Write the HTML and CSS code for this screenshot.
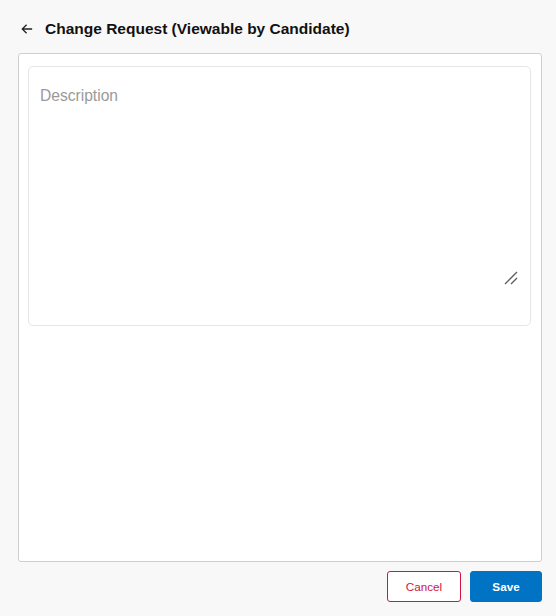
FILE: index.html
```html
<!DOCTYPE html>
<html>
<head>
<meta charset="utf-8">
<link rel="stylesheet" href="styles.css">
</head>
<body>
<div class="page">
  <div class="header">
    <button class="back" aria-label="Back">
      <svg width="14" height="12" viewBox="0 0 14 12"><path d="M13 6H1.5M6.5 1L1.5 6l5 5" fill="none" stroke="#222" stroke-width="1.5"/></svg>
    </button>
    <h1 class="title">Change Request (Viewable by Candidate)</h1>
  </div>
  <div class="card">
    <div class="field">
      <textarea class="desc" placeholder="Description"></textarea>
      <svg class="grip" width="14" height="14" viewBox="0 0 14 14"><path d="M1 13L13 1M7 13L13 7" stroke="#5f5f5f" stroke-width="1.4" fill="none"/></svg>
    </div>
  </div>
  <div class="actions">
    <button class="btn cancel">Cancel</button>
    <button class="btn save">Save</button>
  </div>
</div>
</body>
</html>
```
FILE: styles.css
```css
html, body {
  margin: 0;
  padding: 0;
  background: #f8f8f8;
  font-family: "Liberation Sans", Arial, sans-serif;
}
.page {
  width: 556px;
  height: 616px;
  box-sizing: border-box;
  padding: 16px 14px 14px 18px;
  display: flex;
  flex-direction: column;
}
.header {
  display: flex;
  align-items: center;
  height: 26px;
  margin-bottom: 11px;
}
.back {
  background: none;
  border: 0;
  padding: 0;
  margin: 0 12px 0 3px;
  width: 12px;
  height: 14px;
  display: flex;
  align-items: center;
  cursor: pointer;
}
.title {
  margin: 0;
  font-size: 15.5px;
  font-weight: bold;
  color: #111;
}
.card {
  flex: 1;
  background: #fff;
  border: 1px solid #cfcfcf;
  border-radius: 3px;
  padding: 12px 10px 9px 9px;
}
.field {
  position: relative;
  height: 260px;
  box-sizing: border-box;
  border: 1px solid #e6e6e6;
  border-radius: 5px;
  padding: 19px 12px 40px 11px;
}
.desc {
  display: block;
  width: 100%;
  height: 100%;
  box-sizing: border-box;
  border: 0;
  padding: 0;
  font-family: "Liberation Sans", Arial, sans-serif;
  font-size: 15.6px;
  line-height: 20px;
  color: #333;
  outline: none;
  resize: none;
}
.desc::placeholder {
  color: #9a9a9a;
}
.grip {
  position: absolute;
  right: 12px;
  bottom: 40px;
  pointer-events: none;
}
.actions {
  display: flex;
  justify-content: flex-end;
  gap: 9px;
  margin-top: 9px;
}
.btn {
  height: 31px;
  border-radius: 3px;
  font-family: "Liberation Sans", Arial, sans-serif;
  font-size: 11.7px;
  cursor: pointer;
}
.cancel {
  width: 74px;
  background: #fff;
  border: 1px solid #d21440;
  color: #d21440;
}
.save {
  width: 72px;
  background: #0073c4;
  border: 1px solid #0073c4;
  color: #fff;
  font-weight: bold;
}
```
